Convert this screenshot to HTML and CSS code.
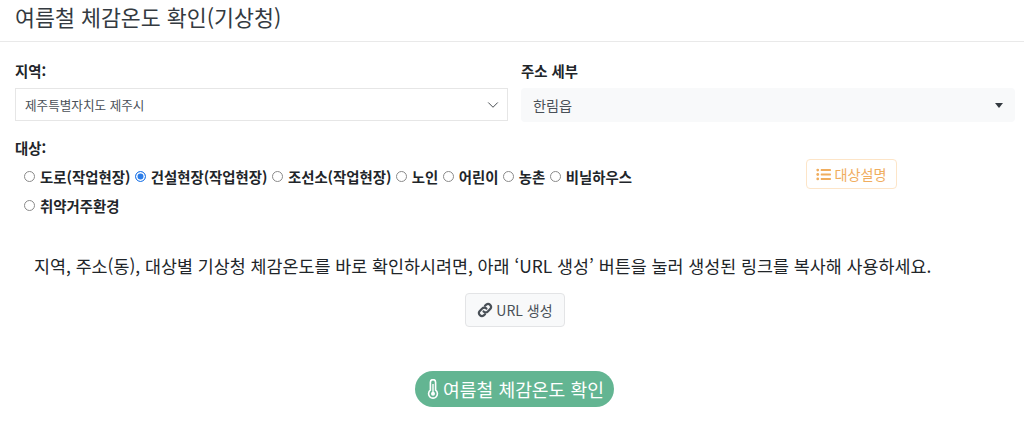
FILE: index.html
```html
<!DOCTYPE html>
<html lang="ko">
<head>
<meta charset="utf-8">
<title>여름철 체감온도 확인</title>
<link rel="stylesheet" href="styles.css">
</head>
<body>
<header class="title-bar"><h1 class="title">여름철 체감온도 확인(기상청)</h1></header>
<main class="content">
  <div class="selects">
    <div class="field">
      <label class="label">지역:</label>
      <div class="select-region"><span>제주특별자치도 제주시</span>
        <svg class="chev" viewBox="0 0 16 16" width="12" height="12"><path d="M2 5l6 6 6-6" fill="none" stroke="#343a40" stroke-width="1.2" stroke-linecap="round" stroke-linejoin="round"/></svg>
      </div>
    </div>
    <div class="field">
      <label class="label">주소 세부</label>
      <div class="select-detail"><span>한림읍</span><i class="caret"></i></div>
    </div>
  </div>
  <div class="target">
    <div class="label">대상:</div>
    <div class="target-row">
      <div class="radios">
        <label class="radio"><span class="dot"></span>도로(작업현장)</label>
        <label class="radio"><span class="dot on"></span>건설현장(작업현장)</label>
        <label class="radio"><span class="dot"></span>조선소(작업현장)</label>
        <label class="radio"><span class="dot"></span>노인</label>
        <label class="radio"><span class="dot"></span>어린이</label>
        <label class="radio"><span class="dot"></span>농촌</label>
        <label class="radio"><span class="dot"></span>비닐하우스</label>
        <label class="radio"><span class="dot"></span>취약거주환경</label>
      </div>
      <button class="btn-target">
        <svg viewBox="0 0 16 14" width="15" height="13"><g fill="#f0ad5e"><circle cx="1.8" cy="2.2" r="1.5"/><circle cx="1.8" cy="7" r="1.5"/><circle cx="1.8" cy="11.8" r="1.5"/><rect x="5" y="1.2" width="11" height="2" rx=".6"/><rect x="5" y="6" width="11" height="2" rx=".6"/><rect x="5" y="10.8" width="11" height="2" rx=".6"/></g></svg>
        대상설명</button>
    </div>
  </div>
  <p class="notice">지역, 주소(동), 대상별 기상청 체감온도를 바로 확인하시려면, 아래 ‘URL 생성’ 버튼을 눌러 생성된 링크를 복사해 사용하세요.</p>
  <div class="center url-wrap">
    <button class="btn-url">
      <svg viewBox="0 0 16 16" width="16" height="16"><g fill="none" stroke="#495057" stroke-width="2.2" stroke-linecap="round"><path d="M6.6 9.4a2.9 2.9 0 0 0 4.2 0l2.6-2.6a3 3 0 0 0-4.2-4.2L8 3.8"/><path d="M9.4 6.6a2.9 2.9 0 0 0-4.2 0L2.6 9.2a3 3 0 0 0 4.2 4.2L8 12.2"/></g></svg>
      URL 생성</button>
  </div>
  <div class="center check-wrap">
    <button class="btn-check">
      <svg viewBox="0 0 12 20" width="12" height="20"><path d="M3.4 3.2a2.6 2.6 0 0 1 5.2 0v8a4.4 4.4 0 1 1-5.2 0z" fill="none" stroke="#fff" stroke-width="1.6"/><circle cx="6" cy="14.8" r="2" fill="#fff"/><rect x="5.3" y="5" width="1.4" height="9" fill="#fff"/></svg>
      여름철 체감온도 확인</button>
  </div>
</main>
</body>
</html>
```
FILE: styles.css
```css
* { box-sizing: border-box; }
html, body { margin: 0; padding: 0; }
body {
  width: 1024px;
  height: 429px;
  overflow: hidden;
  background: #fff;
  color: #212529;
  font-family: "Noto Sans CJK KR", "Noto Sans", sans-serif;
  font-size: 14px;
}
.title-bar { height: 42px; border-bottom: 1px solid #e9e9e9; padding: 0 15px; }
.title { margin: 0; font-size: 21.7px; font-weight: 400; line-height: 34px; color: #343a40; }
.content { padding: 0 15px; }
.selects { display: grid; grid-template-columns: 493px 494px; gap: 13px; padding-top: 19px; }
.label { display: block; font-weight: 700; font-size: 14.4px; line-height: 20px; margin-bottom: 7px; color: #212529; }
.select-region {
  height: 33px; border: 1px solid #e6e6e6; padding: 0 9px;
  display: flex; align-items: center; justify-content: space-between;
  font-size: 12.6px; color: #495057;
}
.chev { margin-right: -1px; }
.select-detail {
  height: 34px; background: #f8f9fa; border-radius: 4px; padding: 0 12px;
  display: flex; align-items: center; justify-content: space-between;
  font-size: 14.2px; color: #495057;
}
.caret { width: 0; height: 0; border: 4px solid transparent; border-top: 5px solid #343a40; border-bottom: 0; }
.target { margin-top: 16px; }
.target .label { margin-bottom: 0; }
.target-row { display: flex; align-items: flex-start; }
.radios { width: 690px; padding: 4px 0 0 9px; display: flex; flex-wrap: wrap; gap: 0 4.4px; }
.radio { display: inline-flex; align-items: center; font-weight: 700; font-size: 14.4px; height: 29px; color: #212529; }
.radio:last-child { height: 28px; }
.dot { width: 11px; height: 11px; border-radius: 50%; border: 1px solid #8a8a8a; margin-right: 5px; background: #fff; }
.dot.on { border-color: #2b7de9; box-shadow: inset 0 0 0 1.5px #fff; background: #2b7de9; }
.btn-target {
  margin: 1px 0 0 101px; width: 91px; height: 30px; padding: 0;
  display: inline-flex; align-items: center; justify-content: center; gap: 3px;
  background: #fff; border: 1px solid #fde5c8; border-radius: 4px;
  color: #f0ad5e; font: 400 14.2px "Noto Sans CJK KR", sans-serif;
}
.notice { margin: 35px 0 0; padding-left: 19px; font-size: 17.37px; line-height: 24px; color: #212529; white-space: nowrap; }
.center { display: flex; justify-content: center; }
.url-wrap { margin-top: 15px; padding-left: 6px; }
.btn-url {
  width: 100px; height: 34px; padding: 0;
  display: inline-flex; align-items: center; justify-content: center; gap: 3px;
  background: #f8f9fa; border: 1px solid #e3e4e6; border-radius: 4px;
  color: #495057; font: 400 14px "Noto Sans CJK KR", sans-serif;
}
.check-wrap { margin-top: 44px; padding-left: 4px; }
.btn-check {
  width: 199px; height: 36px; padding: 0 0 0 3px;
  display: inline-flex; align-items: center; justify-content: center; gap: 4px;
  background: #63b592; border: 0; border-radius: 18px;
  color: #fff; font: 400 18.2px "Noto Sans CJK KR", sans-serif;
}
```
